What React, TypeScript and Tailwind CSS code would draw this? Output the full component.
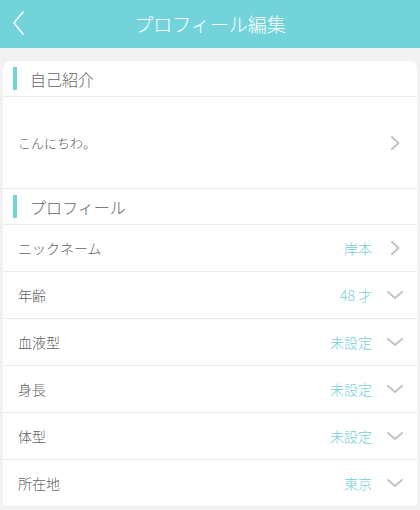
import React from "react";

const font = { fontFamily: '"Noto Sans CJK JP", "Noto Sans", sans-serif' };

function ChevronRight() {
  return (
    <svg width="12" height="16" viewBox="0 0 12 16" className="shrink-0">
      <path d="M3 2 L9.5 8 L3 14" fill="none" stroke="#c4c4c4" strokeWidth="2" strokeLinecap="round" strokeLinejoin="round" />
    </svg>
  );
}

function ChevronDown() {
  return (
    <svg width="18" height="12" viewBox="0 0 18 12" className="shrink-0">
      <path d="M2 3 L9 9 L16 3" fill="none" stroke="#c4c4c4" strokeWidth="2" strokeLinecap="round" strokeLinejoin="round" />
    </svg>
  );
}

function SectionHeader({ title }: { title: string }) {
  return (
    <div className="flex h-[36px] items-center border-b border-[#ececec] pl-[10px]">
      <div className="h-[23px] w-[4px] bg-[#72d3db]" />
      <span className="ml-[13px] text-[16px] font-light text-[#636363]">{title}</span>
    </div>
  );
}

function Row({ label, value, kind }: { label: string; value: string; kind: "right" | "down" }) {
  return (
    <div className="flex h-[47px] items-center border-b border-[#ececec] pl-[15px] pr-[13px]">
      <span className="flex-1 text-[14px] font-light text-[#636363]">{label}</span>
      <span className="text-[14px] font-light text-[#74cfd6]">{value}</span>
      <div className="ml-[14px] flex w-[18px] justify-center">
        {kind === "right" ? <ChevronRight /> : <ChevronDown />}
      </div>
    </div>
  );
}

export default function App() {
  return (
    <div className="h-[510px] w-[420px] overflow-hidden bg-[#f2f2f2]" style={font}>
      <div className="relative flex h-[48px] items-center justify-center bg-[#72d3db]">
        <svg width="14" height="24" viewBox="0 0 14 24" className="absolute left-[12px] top-[11px]">
          <path d="M11 1 L2 12 L11 23" fill="none" stroke="#fff" strokeWidth="1.5" strokeLinecap="round" strokeLinejoin="round" />
        </svg>
        <span className="text-[19px] font-light text-white">プロフィール編集</span>
      </div>
      <div className="mx-[3px] mt-[13px] rounded-t-[8px] bg-white">
        <SectionHeader title="自己紹介" />
        <div className="flex h-[92px] items-center border-b border-[#ececec] pl-[15px] pr-[13px]">
          <span className="flex-1 text-[13px] font-light text-[#636363]">こんにちわ。</span>
          <div className="flex w-[18px] justify-center">
            <ChevronRight />
          </div>
        </div>
        <SectionHeader title="プロフィール" />
        <Row label="ニックネーム" value="岸本" kind="right" />
        <Row label="年齢" value="48 才" kind="down" />
        <Row label="血液型" value="未設定" kind="down" />
        <Row label="身長" value="未設定" kind="down" />
        <Row label="体型" value="未設定" kind="down" />
        <Row label="所在地" value="東京" kind="down" />
      </div>
    </div>
  );
}
